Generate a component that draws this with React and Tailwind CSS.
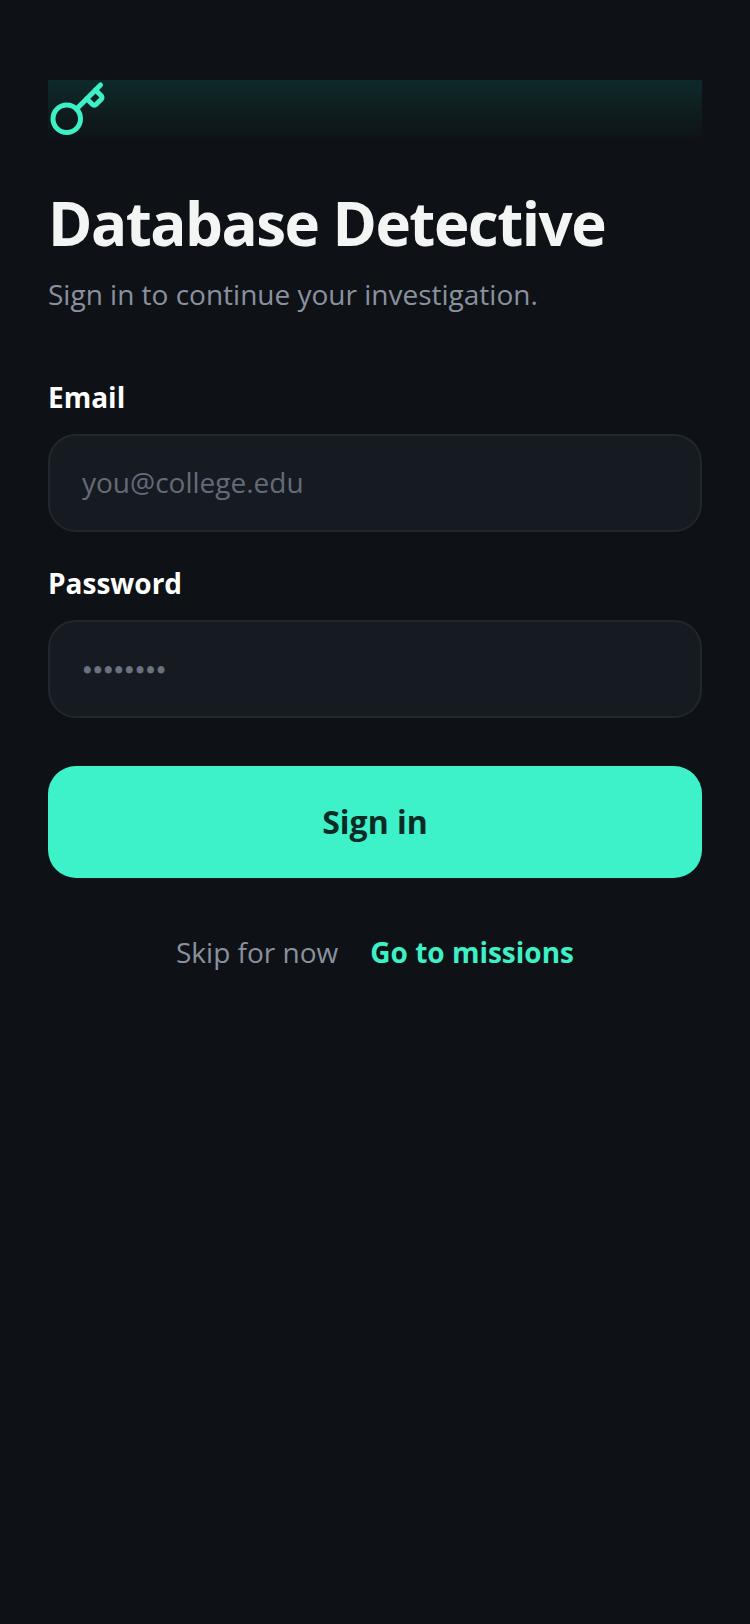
import { Key } from "lucide-react";

export default function App() {
  return (
    <div className="min-h-[1624px] bg-[#0e1216] px-12 pt-20 font-['Open_Sans',sans-serif] antialiased">
      <div className="h-[60px] bg-gradient-to-b from-[#0c2a29] to-[#0e1216]">
        <Key size={60} color="#3df0c6" strokeWidth={2} />
      </div>
      <h1 className="mt-[47px] text-[60px] leading-[72px] font-bold tracking-[-1.5px] text-[#f3f5f5]">Database Detective</h1>
      <p className="mt-[15px] text-[28px] leading-[40px] text-[#8a919e]">Sign in to continue your investigation.</p>
      <div className="mt-[63px] text-[28px] leading-[40px] font-bold text-white">Email</div>
      <div className="mt-[17px] flex h-[98px] items-center rounded-[28px] border-2 border-[#22272e] bg-[#161b21] px-8 pb-[2px] text-[28px] text-[#636b78]">you@college.edu</div>
      <div className="mt-[31px] text-[28px] leading-[40px] font-bold text-white">Password</div>
      <div className="mt-[17px] flex h-[98px] items-center rounded-[28px] border-2 border-[#22272e] bg-[#161b21] px-8 text-[28px] text-[#6b7280] [-webkit-text-stroke:1px_#6b7280]">••••••••</div>
      <div className="mt-12 flex h-28 items-center justify-center rounded-[28px] bg-[#3df2c8] text-[32px] font-bold text-[#0a2a25]">Sign in</div>
      <div className="mt-[54px] flex justify-center gap-8 text-[28px] leading-[40px]">
        <span className="text-[#8a919e]">Skip for now</span>
        <span className="font-bold text-[#3df0c6]">Go to missions</span>
      </div>
    </div>
  );
}
